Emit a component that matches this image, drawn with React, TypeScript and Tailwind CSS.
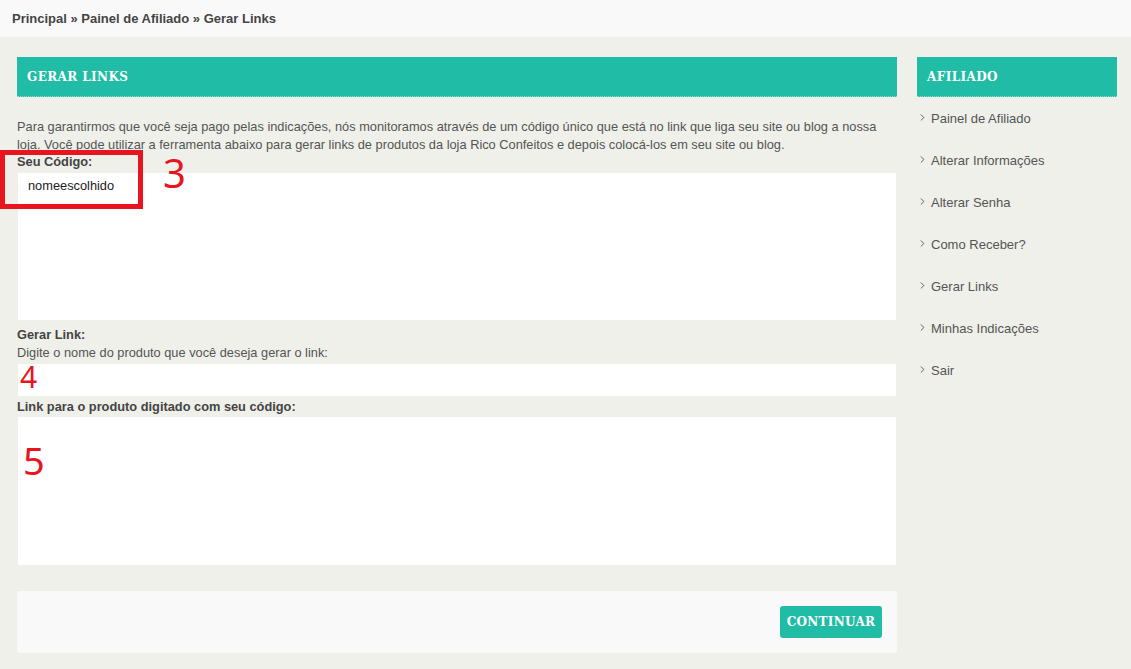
import { ChevronRight } from 'lucide-react';

const menu = [
  'Painel de Afiliado',
  'Alterar Informações',
  'Alterar Senha',
  'Como Receber?',
  'Gerar Links',
  'Minhas Indicações',
  'Sair',
];

function BoxTitle({ children }: { children: React.ReactNode }) {
  return (
    <div className="h-10 bg-[#20bca6] border-b border-dotted border-[#8fd9cd] flex items-center px-[10px]">
      <span className="text-white text-[12px] font-bold tracking-[0.4px] [font-family:'DejaVu_Serif',serif]">
        {children}
      </span>
    </div>
  );
}

export default function App() {
  return (
    <div className="min-h-[669px] bg-[#eef0e9] text-[#555] [font-family:'Liberation_Sans',Arial,sans-serif]">
      <div className="h-[37px] bg-[#f9f9f9] flex items-center px-3 text-[13px] font-bold text-[#444]">
        Principal » Painel de Afiliado » Gerar Links
      </div>

      <div className="flex gap-5 pl-[17px] pt-5">
        <div className="w-[880px] shrink-0 relative">
          <BoxTitle>GERAR LINKS</BoxTitle>

          <p className="mt-[21px] text-[12.8px] leading-[18px] text-[#555]">
            Para garantirmos que você seja pago pelas indicações, nós monitoramos através de um código único que está no link que liga seu site ou blog a nossa loja. Você pode utilizar a ferramenta abaixo para gerar links de produtos da loja Rico Confeitos e depois colocá-los em seu site ou blog.
          </p>

          <div className="mt-[1px] text-[12.8px] font-bold text-[#444] leading-[14px]">Seu Código:</div>
          <div className="mt-[4px] mx-[1px] h-[147px] bg-white px-[10px] pt-[3px] text-[12.8px] text-[#222]">
            nomeescolhido
          </div>

          <div className="mt-[8px] text-[12.8px] font-bold text-[#444] leading-[14px]">Gerar Link:</div>
          <div className="mt-[4px] text-[12.8px] text-[#555] leading-[14px]">Digite o nome do produto que você deseja gerar o link:</div>
          <div className="mt-[4px] mx-[1px] h-[32px] bg-white" />

          <div className="mt-[4px] text-[12.8px] font-bold text-[#444] leading-[14px]">Link para o produto digitado com seu código:</div>
          <div className="mt-[3px] mx-[1px] h-[148px] bg-white" />

          <div className="mt-[26px] h-[62px] bg-[#f9f9f9] rounded-[2px] flex items-center justify-end pr-[15px]">
            <button className="h-[32px] w-[102px] bg-[#20bca6] rounded-[3px] text-white text-[12px] font-bold tracking-[0.3px] [font-family:'DejaVu_Serif',serif]">
              CONTINUAR
            </button>
          </div>

          {/* annotations */}
          <div className="absolute left-[-17px] top-[93px] w-[143px] h-[59px] border-[5px] border-[#e8141e]" />
          <div className="absolute left-[146px] top-[96px] text-[#e8141e] text-[40px] leading-none [font-family:'Noto_Sans',sans-serif]">3</div>
          <div className="absolute left-[3px] top-[306px] text-[#e8141e] text-[30px] leading-[28px] [font-family:'Noto_Sans',sans-serif]">4</div>
          <div className="absolute left-[6px] top-[384px] text-[#e8141e] text-[38px] leading-none [font-family:'Noto_Sans',sans-serif]">5</div>
        </div>

        <div className="w-[200px] shrink-0">
          <BoxTitle>AFILIADO</BoxTitle>
          <ul className="pt-[12px]">
            {menu.map((m) => (
              <li key={m} className="h-[42px] flex items-start text-[13px] text-[#555]">
                <ChevronRight className="w-[11px] h-[11px] mt-[3px] mr-[3px] text-[#555]" strokeWidth={2} />
                {m}
              </li>
            ))}
          </ul>
        </div>
      </div>
    </div>
  );
}
